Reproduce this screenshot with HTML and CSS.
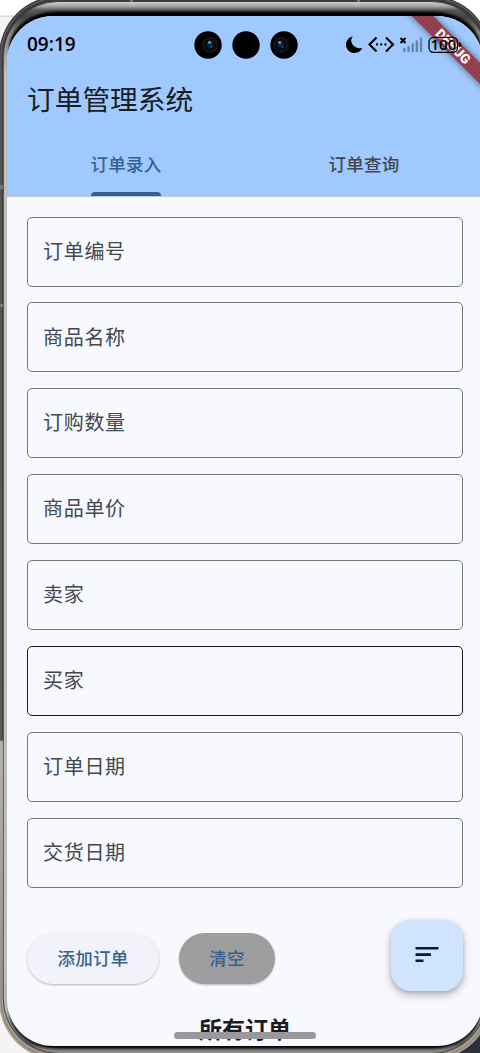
FILE: index.html
```html
<!DOCTYPE html>
<html lang="zh-CN">
<head>
<meta charset="utf-8">
<title>订单管理系统</title>
<link rel="stylesheet" href="styles.css">
</head>
<body>
<div class="stage">
  <svg class="bezel" width="480" height="1053" viewBox="0 0 480 1053" aria-hidden="true">
    <defs>
      <linearGradient id="rail" x1="0" y1="0" x2="0" y2="1053" gradientUnits="userSpaceOnUse">
        <stop offset="0" stop-color="#3c3c3c"/><stop offset=".703" stop-color="#4c4a47"/>
        <stop offset=".704" stop-color="#e2dccd"/><stop offset="1" stop-color="#a39a89"/>
      </linearGradient>
      <linearGradient id="metal" x1="0" y1="2" x2="0" y2="1054" gradientUnits="userSpaceOnUse">
        <stop offset="0" stop-color="#d0d0d0"/><stop offset=".004" stop-color="#a5a5a5"/><stop offset=".008" stop-color="#555"/>
        <stop offset=".015" stop-color="#444"/><stop offset=".03" stop-color="#888"/><stop offset=".06" stop-color="#b4b4b4"/>
        <stop offset=".96" stop-color="#b4b4b4"/><stop offset=".99" stop-color="#555"/><stop offset="1" stop-color="#999"/>
      </linearGradient>
      <filter id="soft" x="-5%" y="-20%" width="110%" height="140%"><feGaussianBlur stdDeviation="1"/></filter>
    </defs>
    <rect width="480" height="16" fill="#fff"/>
    <rect y="16" width="480" height="1037" fill="#f4f4f4"/>
    <rect y="15.500" width="480" height="1.500" fill="#ddd"/>
    <rect x="440" y="0" width="40" height="100" fill="#fff"/>
    <rect x="440" y="1000" width="40" height="53" fill="#2b303c"/>
    <rect x="-1" y="-4" width="492" height="1064" rx="60" fill="url(#rail)"/>
    <rect x="1" y="-2" width="488" height="1059" rx="57" fill="none" stroke="#77756f" stroke-width=".8"/>
    <rect x="3.200" y="1.500" width="483.600" height="1052" rx="55" fill="url(#metal)" stroke="#333" stroke-width=".9"/>
    <rect x="9" y="11.500" width="472" height="75" rx="48" fill="#000" filter="url(#soft)"/>
    <rect x="9" y="970" width="472" height="78.500" rx="48" fill="#000" filter="url(#soft)"/>
    <path d="M5.300 985V70" stroke="#c2c2c2" stroke-width="2" fill="none"/>
    <path d="M130 0h3v2h-3zM357 0h3v2h-3z" fill="#777"/>
    <path d="M0 185h3v4H0zM0 304h3v3H0z" fill="#777"/>
  </svg>
  <div class="screen">
    <header class="top">
      <div class="ribbon">DEBUG</div>
      <div class="status">
        <span class="clock">09:19</span>
        <svg class="lenses" width="106" height="30" viewBox="0 0 106 30">
          <circle cx="15" cy="15" r="13.700"/><circle cx="53" cy="15" r="13.700"/><circle cx="91" cy="15" r="13.700"/>
          <circle cx="17" cy="15" r="7" fill="#070b10" stroke="#111418" stroke-width="2"/>
          <circle cx="88" cy="15" r="7" fill="#070b10" stroke="#111418" stroke-width="2"/>
          <circle cx="17" cy="14" r="3.200" fill="#10233f"/><circle cx="87.500" cy="14" r="3.200" fill="#10233f"/>
          <circle cx="16.500" cy="12.500" r="1.300" fill="#86b9e8"/><circle cx="86.700" cy="12.500" r="1.300" fill="#86b9e8"/>
          <circle cx="18.500" cy="17" r="1" fill="#2c5687"/><circle cx="89.500" cy="17" r="1" fill="#2c5687"/>
        </svg>
        <svg class="signals" width="118" height="22" viewBox="0 0 118 22">
          <path d="M8 3.200C3.800 4.300 1 7.600 1 11.700 1 16.600 4.900 20 9.600 20c3.800 0 6.600-2.200 7.700-5.200C12 16.700 6.200 12.500 6.200 7.300 6.200 5.700 7 4.300 8 3.200Z"/>
          <g fill="none" stroke="#000" stroke-width="2.100"><path d="m31.500 4.600-7 6.900 7 6.900M41 4.600l7 6.900-7 6.900"/></g>
          <circle cx="32" cy="11.500" r="1.150"/><circle cx="36.200" cy="11.500" r="1.150"/><circle cx="40.400" cy="11.500" r="1.150"/>
          <path d="m55.500 5 5 5m0-5-5 5" stroke="#000" stroke-width="2"/>
          <path d="M59.300 16v2M63.500 14v4M67.700 11.500V18M71.800 8.500V18M76 5.500V18" stroke="#6683a8" stroke-width="2.400" stroke-linecap="round"/>
          <rect x="84" y="4.300" width="28.500" height="15" rx="4.500" fill="none" stroke="#000" stroke-width="1.300"/>
          <path d="M114 9.300q2.300 0 2.300 2.500t-2.300 2.500z"/>
          <text x="98.400" y="16.900" text-anchor="middle" class="charge">100</text>
        </svg>
      </div>
      <h1 class="title">订单管理系统</h1>
      <nav class="tabs">
        <div class="tab active"><span>订单录入</span></div>
        <div class="tab"><span>订单查询</span></div>
      </nav>
    </header>
    <main class="form">
      <div class="field">订单编号</div>
      <div class="field">商品名称</div>
      <div class="field">订购数量</div>
      <div class="field">商品单价</div>
      <div class="field">卖家</div>
      <div class="field hover">买家</div>
      <div class="field">订单日期</div>
      <div class="field">交货日期</div>
    </main>
    <div class="actions">
      <div class="pill">添加订单</div>
      <div class="pill clear">清空</div>
      <div class="fab">
        <svg width="24" height="18" viewBox="0 0 24 18"><path d="M.5 1h23v2.600H.5zM.5 7.300H16v2.600H.5zM.5 13.500h8v2.600h-8z" fill="#001d36"/></svg>
      </div>
    </div>
    <h2 class="all">所有订单</h2>
    <div class="handle"></div>
  </div>
</div>
</body>
</html>
```
FILE: styles.css
```css
* { box-sizing: border-box; }
body { margin: 0; font-family: "Noto Sans CJK SC", sans-serif; }
.stage { position: relative; width: 480px; height: 1053px; overflow: hidden; padding: 16px 0 0 7px; }
.bezel { position: absolute; left: 0; top: 0; }
.screen { position: relative; width: 476px; height: 1030px; border-radius: 46px; overflow: hidden; background: #f8f9ff; color: #191c20; }
.top { position: relative; height: 180.500px; background: #a0c9ff; border-bottom: 1px solid #c3c6cf; }
.status { position: relative; height: 57px; display: flex; align-items: center; padding-left: 20px; }
.clock { width: 160px; margin-top: -1px; font: 600 19px/24px "Open Sans", "Noto Sans", sans-serif; color: #000; }
.lenses { margin-left: 5.500px; }
.signals { margin-left: 46.500px; margin-top: -1px; flex: none; }
.charge { font: 600 15px "Open Sans", sans-serif; }
.title { margin: 6px 0 0 20px; font-size: 27.700px; line-height: 39px; font-weight: 400; }
.tabs { display: grid; grid-template-columns: 1fr 1fr; height: 59px; margin-top: 19px; }
.tab { display: flex; justify-content: center; font-size: 17.500px; font-weight: 500; line-height: 53px; letter-spacing: .2px; color: #43474e; }
.tab span { position: relative; height: 59px; }
.active { color: #36618e; }
.active span::after { content: ""; position: absolute; left: 0; right: 0; bottom: 0; height: 4px; border-radius: 4px 4px 0 0; background: #36618e; }
.form { display: grid; gap: 15.860px; padding: 20px 20px 0; }
.field { height: 70px; border: 1px solid #73777f; border-radius: 5px; padding: 0 0 2.500px 15px; display: flex; align-items: center; font-size: 20px; letter-spacing: .7px; color: #43474e; }
.field.hover { border-color: #191c20; }
.actions { display: flex; height: 72px; margin: 31.500px 20px 0; align-items: center; }
.pill { width: 132px; height: 51px; border-radius: 26px; display: flex; align-items: center; justify-content: center; padding-bottom: 2px; font-size: 17.500px; letter-spacing: .2px; font-weight: 500; color: #36618e; background: #f2f3fa; box-shadow: 0 1px 2px #0004; margin-top: 7px; }
.pill.clear { width: 96px; margin-left: 20px; background: #9e9e9e; }
.fab { width: 72px; height: 71px; border-radius: 20px; margin: 0 0 0 auto; display: grid; place-items: center; background: #d1e4ff; box-shadow: 0 4px 8px #0004, 0 1px 4px #0002; }
.all { margin: 20px 0 0; text-align: center; font-size: 23px; line-height: 34px; font-weight: 700; }
.handle { position: absolute; left: 167px; top: 1016px; width: 142px; height: 7px; border-radius: 4px; background: #99999d; }
.ribbon { position: absolute; left: 376px; top: 22.500px; width: 140px; height: 15px; transform: rotate(45deg); background: #963f4d; color: #fff; box-shadow: 0 0 7px #0008; font: 900 13.500px/15px Roboto, sans-serif; text-align: center; }
```
